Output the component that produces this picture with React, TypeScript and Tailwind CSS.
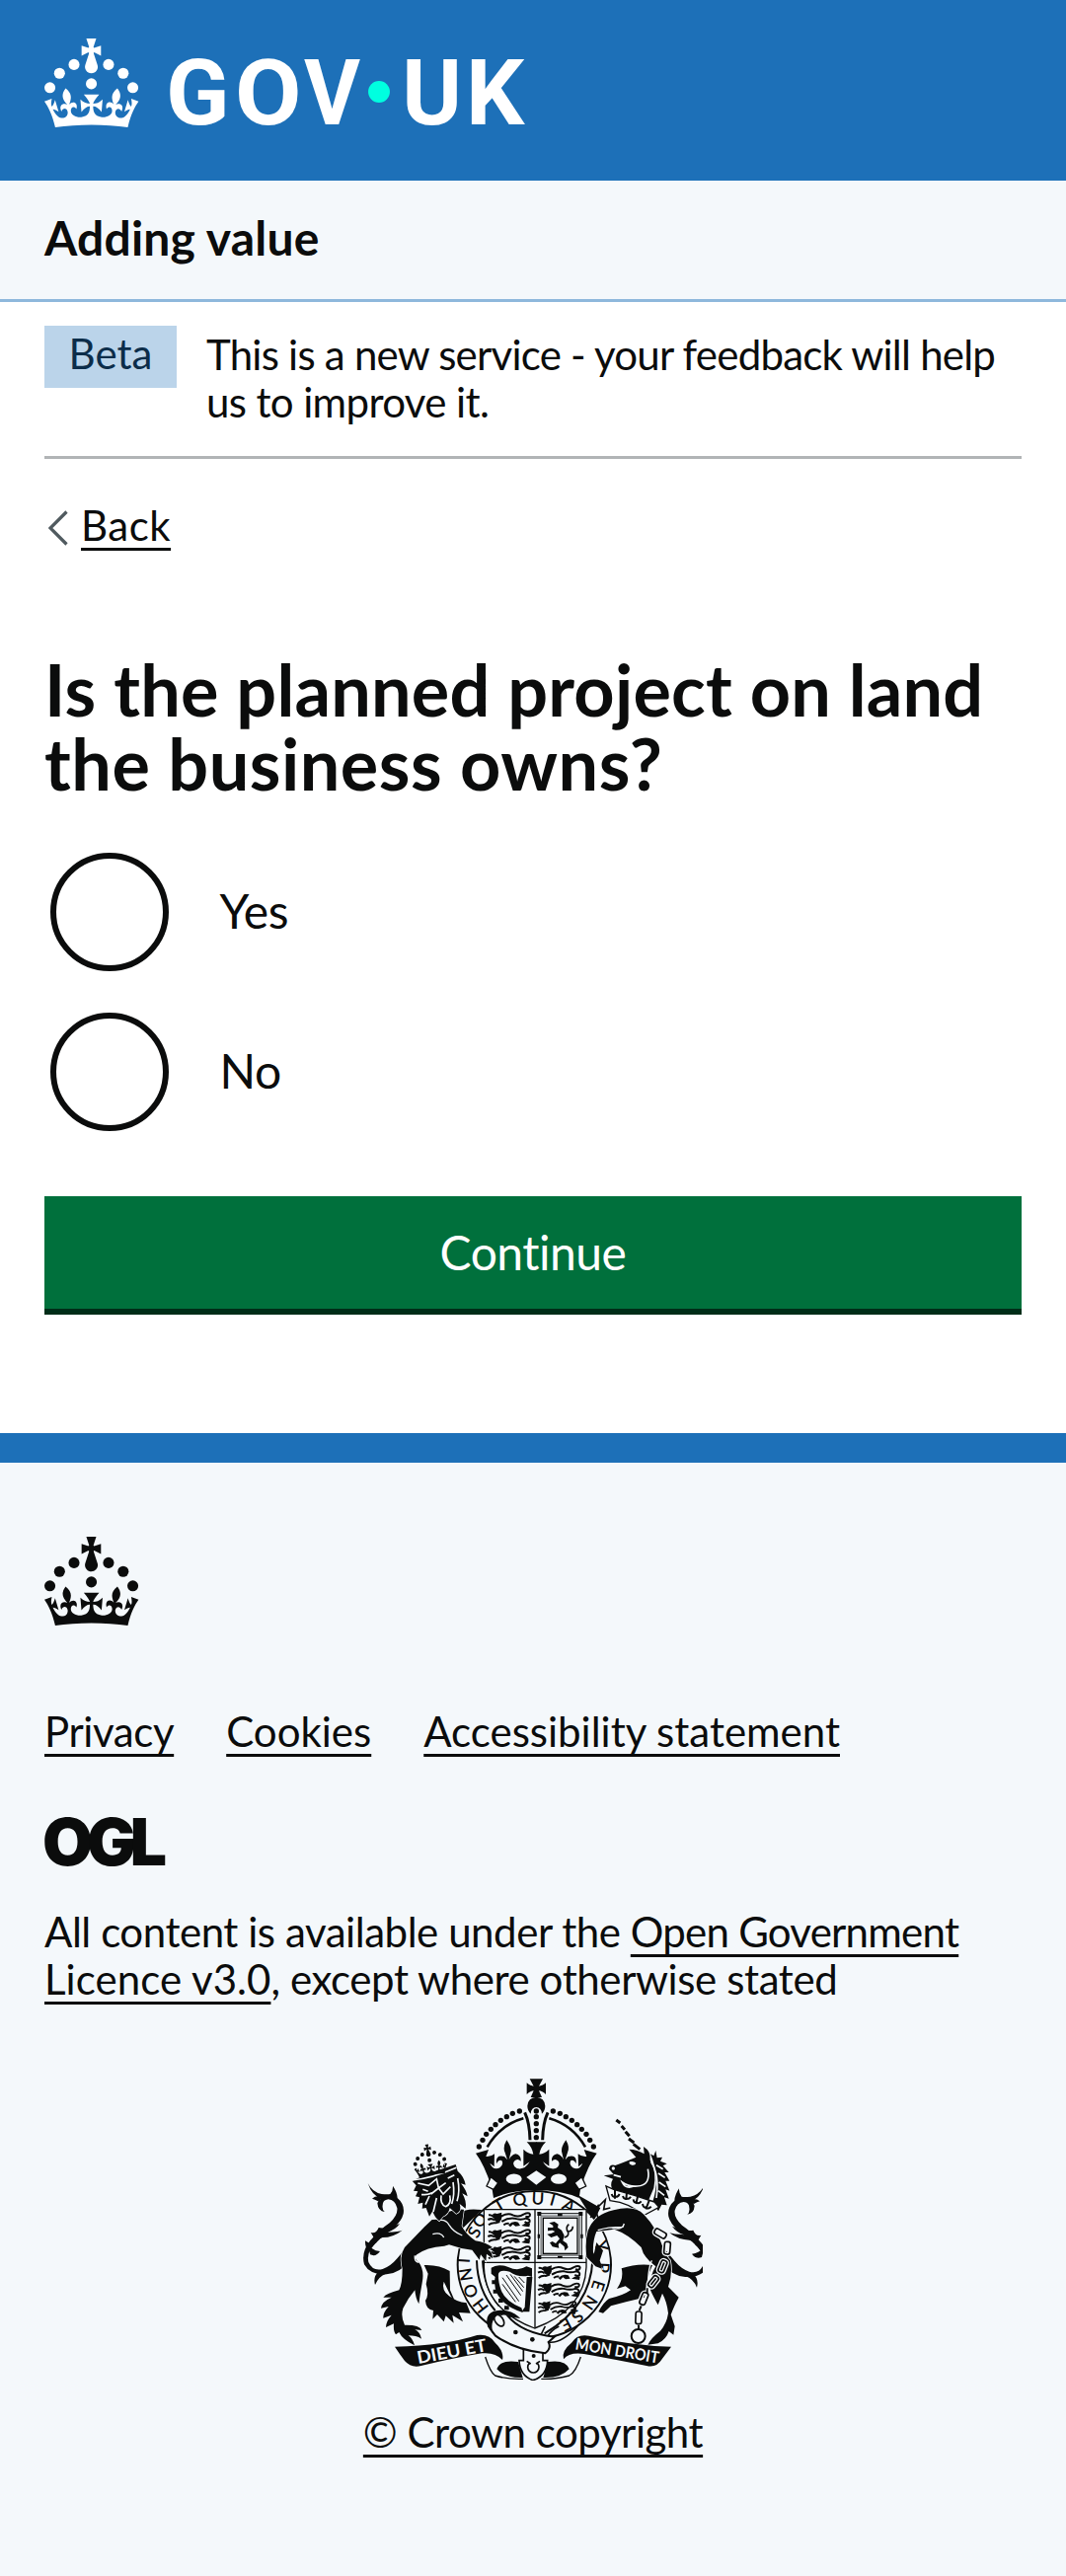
import React from 'react';

const CROWN_CIRCLES: [number, number][] = [
  [20, 17.6],
  [10.2, 23.5],
  [3.7, 33.2],
  [31.7, 30.6],
  [43.3, 17.6],
  [53.2, 23.5],
  [59.7, 33.2],
];

function CrownShape() {
  return (
    <g>
      {CROWN_CIRCLES.map(([x, y]) => (
        <circle key={x} cx={x} cy={y} r="3.7" />
      ))}
      <path d="M33.1,9.8c.2-.1.3-.3.5-.5l4.6,2.4v-6.8l-4.6,1.5c-.1-.2-.3-.3-.5-.5l1.9-5.9h-6.7l1.9,5.9c-.2.1-.3.3-.5.5l-4.6-1.5v6.8l4.6-2.4c.1.2.3.3.5.5l-2.6,8c-.9,2.8,1.2,5.7,4.1,5.7h0c3,0,5.1-2.9,4.1-5.7l-2.6-8ZM37,37.9s-3.4,3.8-4.1,6.1c2.2,0,4.2-.5,6.4-2.8l-.7,8.5c-2-2.8-4.4-4.1-5.7-3.8.1,3.1.5,6.7,5.8,7.2,3.7.3,6.7-1.5,7-3.8.4-2.6-2-4.3-3.7-1.6-1.4-4.5,2.4-6.1,4.9-3.2-1.9-4.5-1.8-7.7,2.4-10.9,3,4,2.6,7.3-1.2,11.1,2.4-1.3,6.2,0,4,4.6-1.2-2.8-3.7-2.2-4.2.2-.3,1.7.7,3.7,3,4.2,1.9.3,4.7-.9,7-5.9-1.3,0-2.4.7-3.9,1.7l2.4-8c.6,2.3,1.4,3.7,2.2,4.5.6-1.6.5-2.8,0-5.3l5,1.8c-2.6,3.6-5.2,8.7-7.3,17.5-7.4-1.1-15.7-1.7-24.5-1.7h0c-8.8,0-17.1.6-24.5,1.7-2.1-8.9-4.7-13.9-7.3-17.5l5-1.8c-.5,2.5-.6,3.7,0,5.3.8-.8,1.6-2.3,2.2-4.5l2.4,8c-1.5-1-2.6-1.7-3.9-1.7,2.3,5,5.2,6.2,7,5.9,2.3-.4,3.3-2.4,3-4.2-.5-2.4-3-3.1-4.2-.2-2.2-4.6,1.6-6,4-4.6-3.7-3.7-4.2-7.1-1.2-11.1,4.2,3.2,4.3,6.4,2.4,10.9,2.5-2.8,6.3-1.3,4.9,3.2-1.8-2.7-4.1-1-3.7,1.6.3,2.3,3.3,4.1,7,3.8,5.4-.5,5.7-4.2,5.8-7.2-1.3-.2-3.7,1-5.7,3.8l-.7-8.5c2.2,2.3,4.2,2.7,6.4,2.8-.7-2.3-4.1-6.1-4.1-6.1h10.6,0Z" />
    </g>
  );
}

function Logo() {
  return (
    <svg
      viewBox="0 0 324 60"
      className="block h-[90px] w-[486px] overflow-visible fill-white font-['Roboto',sans-serif] font-bold"
      role="img"
      aria-label="GOV.UK"
    >
      <CrownShape />
      <g fontSize="62">
        <text x="82" y="58" textLength="43" lengthAdjust="spacingAndGlyphs">G</text>
        <text x="128.6" y="58" textLength="45" lengthAdjust="spacingAndGlyphs">O</text>
        <text x="175.4" y="58" textLength="38" lengthAdjust="spacingAndGlyphs">V</text>
        <text x="241.5" y="58" textLength="40.5" lengthAdjust="spacingAndGlyphs">U</text>
        <text x="284.6" y="58" textLength="39.5" lengthAdjust="spacingAndGlyphs">K</text>
      </g>
      <circle cx="226" cy="36" r="7.3" fill="#00ffe0" />
    </svg>
  );
}

const INK = '#0b0c0c';
const BG = '#f4f8fb';

const ARCH_DOTS: [number, number][] = [
  [514, 146], [493, 153], [475, 163], [457, 174], [441, 187], [427, 201], [413, 216], [402, 234], [391, 254],
];

const LINKS: [number, number, number][] = [
  [942, 518, -60], [963, 562, 5], [949, 618, 22], [921, 664, 38], [892, 716, 22], [876, 774, 2],
];

// Centres of the letters that run round the garter
const GARTER: [string, number, number][] = [
  ['H', 396, 737], ['O', 366, 692], ['N', 351, 643], ['I', 345, 600],
  ['S', 377, 514], ['O', 394, 478], ['T', 452, 431],
  ['Q', 514, 415], ['U', 570, 412], ['I', 615, 415], ['A', 664, 434],
  ['Y', 763, 556], ['P', 768, 622], ['E', 753, 676], ['N', 727, 728], ['S', 690, 769], ['E', 655, 794],
];

function LionTail() {
  return (
    <g>
      <path d="M53 365Q66 392 95 398Q112 400 121 398Q130 388 129 373Q142 392 143 410Q166 430 161 458Q156 480 130 502Q88 532 64 562Q50 582 55 605Q68 634 98 626Q122 618 142 594L170 560L180 600Q150 640 110 642Q60 645 42 612Q32 575 60 540Q90 505 120 485Q145 462 142 440Q136 416 115 414Q98 416 98 432Q96 446 104 452Q84 450 82 426Q84 416 94 412Q66 404 53 365Z" />
      <path d="M66 412Q78 400 104 408L84 420Q74 414 66 412ZM86 500Q110 505 150 488Q136 508 112 514Q148 512 158 508Q130 530 98 530Q76 535 66 560Q44 575 45 540Q66 556 80 545L62 515Q78 520 86 500ZM52 545Q62 570 90 572Q78 590 60 582ZM75 674Q68 648 86 634L108 640Q86 648 75 674Z" />
    </g>
  );
}

function Passant({ x, y, s = 1 }: { x: number; y: number; s?: number }) {
  return (
    <g transform={`translate(${x} ${y}) scale(${s})`}>
      <path d="M14 8Q20 2 28 6L42 2Q40 10 42 16Q42 28 32 32Q20 30 18 20Z" />
      <path d="M2 10Q12 8 18 16M0 24Q12 18 20 26M2 40Q12 32 24 34L36 30" fill="none" stroke={INK} strokeWidth="6" />
      <path d="M40 14Q60 2 76 10Q94 18 108 8Q126 0 128 8Q128 18 114 14M42 30Q60 18 80 20Q100 26 116 20Q130 22 126 32Q118 36 112 30M48 40Q56 34 64 36" fill="none" stroke={INK} strokeWidth="6" />
      <path d="M62 40Q76 26 92 32L98 42L84 44L76 38L68 46ZM102 42Q116 32 128 36L126 46L112 44Z" />
    </g>
  );
}

function HalfCrown() {
  return (
    <g>
      {ARCH_DOTS.map(([x, y]) => (
        <circle key={x} cx={x} cy={y} r="8" />
      ))}
      <path d="M526 168Q455 188 416 255" fill="none" stroke={INK} strokeWidth="8" />
      <path d="M530 150Q545 182 546 234" fill="none" stroke={INK} strokeWidth="9" />
      <path d="M381 274L420 263L412 284Q426 286 438 276L437 315L424 304Q434 328 454 318Q467 308 460 296Q450 292 444 306Q440 276 468 284L477 294L470 272Q462 256 475 234Q490 256 488 268L482 294Q488 280 502 276Q520 280 518 298Q508 288 498 298Q490 310 506 320Q530 326 545 300L526 313V262Q540 276 556 277Q552 255 536 240H566V386Q490 386 435 410L430 378Q405 305 381 274Z" />
      <ellipse cx="497" cy="352" rx="24" ry="15.500" fill={BG} />
      <path d="M427 346L449 364L435 384L414 374Z" fill={BG} stroke={INK} strokeWidth="4" />
    </g>
  );
}

function CoatOfArms() {
  return (
    <svg viewBox="39 47 1032 918" className="block h-[306px] w-[344px]" fill={INK} aria-hidden="true">
      {/* Dark lining behind the garter */}
      <path d="M335 455Q350 440 400 446L338 505ZM690 400L760 440L740 480Z" />

      {/* Garter */}
      <ellipse cx="559" cy="613" rx="233" ry="224" fill={BG} stroke={INK} strokeWidth="6" />
      <path d="M384 600Q386 690 440 752M402 600Q406 684 452 738M736 600Q730 740 590 822" fill="none" stroke={INK} strokeWidth="6" />
      <g fontSize="52" textAnchor="middle" className="font-['Lato',sans-serif] font-semibold">
        {GARTER.map(([ch, x, y]) => (
          <text
            key={`${x}-${y}`}
            y="18"
            transform={`translate(${x} ${y}) rotate(${(Math.atan2(x - 559, 612 - y) * 180) / Math.PI})`}
          >
            {ch}
          </text>
        ))}
      </g>

      {/* Shield */}
      <path d="M406 445H717V620Q712 750 560 806Q410 750 406 620Z" fill={BG} stroke={INK} strokeWidth="4" />
      <path d="M561 445V804M406 606H717" stroke={INK} strokeWidth="4" />
      <Passant x={418} y={452} />
      <Passant x={418} y={503} />
      <Passant x={418} y={554} />
      <Passant x={570} y={613} />
      <Passant x={570} y={666} s={0.98} />
      <Passant x={570} y={722} s={0.9} />
      <g fill="none" stroke={INK}>
        <rect x="572" y="457" width="131" height="135" strokeWidth="3" />
        <rect x="580" y="465" width="116" height="119" strokeWidth="6" stroke="#8b8e90" />
        <rect x="586" y="471" width="104" height="108" strokeWidth="4" />
      </g>
      <path d="M568 452h12v12h-12zM694 452h12v12h-12zM568 584h12v12h-12zM694 584h12v12h-12zM630 458h14v7h-14zM630 586h14v7h-14zM569 520h7v12h-7zM700 520h7v12h-7z" />
      <path d="M604 486L620 482L632 490L630 500L642 508L650 524L646 540L658 548L662 560L652 570L650 558L636 546L632 552L634 562L614 558L606 546L614 542L624 548L636 534L628 524L610 530L598 520L610 518L622 512L614 508L600 510L600 500L616 500L616 494Z" />
      <path d="M650 530Q664 528 662 514Q652 500 664 490M662 512Q676 510 676 496" fill="none" stroke={INK} strokeWidth="5" />

      {/* Harp */}
      <path d="M428 622Q448 608 480 620Q510 634 535 618L552 624V650L540 646Q510 652 484 634Q455 626 450 640Q448 660 458 690Q470 722 520 744L524 758Q470 742 448 705Q434 680 440 650L428 640Z" />
      <path d="M536 650H553L544 756H520L530 742Z" />
      <path d="M462 652L512 724M474 644L518 706M486 642L524 694M498 648L527 682M462 672L502 726M512 650L529 668" stroke={INK} strokeWidth="3" />
      <path d="M430 660h14v12h-14zM434 688h14v12h-14zM450 716h14v12h-14zM468 738h14v12h-14z" />

      {/* Crown */}
      <path d="M545 48H585L573 70Q582 70 594 60V95Q582 84 573 84L582 104H548L557 84Q548 84 536 95V60Q548 70 557 70Z" />
      <path d="M538 130a27 27 0 0 1 54 0q0 14 -10 24q-2 -20 -17 -20t-17 20q-10 -10 -10 -24Z" />
      {[146, 163, 184, 205, 226].map((y) => (
        <circle key={y} cx="565" cy={y} r="8" />
      ))}
      <HalfCrown />
      <g transform="translate(1130 0) scale(-1 1)">
        <HalfCrown />
      </g>
      <path d="M565 327L595 347L565 370L535 347Z" fill={BG} />

      {/* Lion */}
      <LionTail />
      <path
        d="M248 476L225 498L165 560Q148 585 158 625Q158 670 148 690Q110 700 100 712L125 712Q95 725 93 745L116 740Q98 760 100 775L125 766Q108 785 108 803L132 792Q130 815 138 825L148 818Q158 840 195 858Q190 838 176 828Q200 828 216 838Q212 818 196 810L217 812Q210 795 165 796Q152 770 160 745Q175 715 196 690Q198 715 208 732Q212 700 218 668Q226 630 208 606Q190 590 202 582Q230 560 285 556L300 552Q335 565 370 568L392 598L396 582L412 602L414 580L432 594Q432 575 418 566L432 560Q412 545 380 540Q350 520 338 495L345 445Q300 440 265 475Z"
        stroke={BG}
        strokeWidth="4"
        paintOrder="stroke"
      />
      <path d="M224 614Q270 612 302 632L303 690L318 724L306 710L284 664Q276 690 300 708Q330 730 352 728L365 760L330 758L342 786L310 766L314 790L290 768L284 786L264 764L250 778L252 752Q230 750 228 722Q240 704 230 672L236 640Z" />
      <path d="M196 585Q194 605 208 606M250 520Q275 512 284 530M268 478Q290 474 300 492Q312 512 340 524" fill="none" stroke={BG} strokeWidth="4" />
      <path
        d="M188 358L230 338L320 308L326 328Q346 345 350 370L336 366Q352 385 356 405L340 396Q354 420 350 442L332 428Q340 450 322 458L302 440Q298 460 282 466L270 480Q255 468 250 450L240 466L230 440L218 442L220 424L205 428L210 408L198 405L205 390L192 388L200 372Z"
        stroke={BG}
        strokeWidth="4"
        paintOrder="stroke"
      />
      <path d="M188 356Q250 350 322 318M205 365L238 372L262 352L268 380L290 364M245 398L268 380L282 398L304 376M276 402Q272 430 290 436Q308 428 302 402M216 400Q238 400 248 394M228 430L240 404M252 452L262 410M312 362Q318 400 308 428M326 350Q334 390 324 420M296 350L316 340M220 384L236 390" fill="none" stroke={BG} strokeWidth="5" />
      <g transform="translate(182 256) rotate(-10) scale(1.6)">
        <CrownShape />
      </g>

      {/* Unicorn */}
      <g transform="translate(1128 8) scale(-1 1)">
        <LionTail />
      </g>
      <path d="M808 173L820 182M824 191L834 202M836 208L848 222M846 230L862 242M860 246L880 262" stroke={INK} strokeWidth="9" />
      <path d="M786 322Q788 306 805 311Q845 296 868 286L847 262Q872 262 893 276L891 254Q914 268 911 295Q932 330 922 380L900 432L880 418Q850 420 838 398Q815 384 800 392Q786 370 798 352L770 342L800 338Z" />
      <path d="M912 276L922 282L928 266L932 288L948 286L942 298L962 306L950 312L968 332L955 332L970 358L958 358L970 388L958 384L968 412L954 408L962 432L946 430L936 450L918 424Q944 350 912 276Z" />
      <path d="M848 300a10 8 0 1 0 20 4q-8 -8 -20 -4ZM794 320a5 5 0 1 0 10 0a5 5 0 1 0 -10 0Z" fill={BG} />
      <path d="M904 322Q914 372 872 374Q846 376 826 362Q836 384 862 374M800 340L822 346M914 300Q940 340 930 410M930 310L950 322M936 335L956 348M938 362L958 376M936 388L954 402" fill="none" stroke={BG} strokeWidth="5" />
      <path d="M777 374L789 418Q852 425 890 464L938 438L924 422Q860 400 800 384Z" fill={BG} stroke={INK} strokeWidth="4" />
      <g fill="none" stroke={INK} strokeWidth="6">
        <path d="M804 384V412M794 398Q798 410 804 404Q812 410 818 398M840 392L838 416M828 404Q832 416 838 410Q846 416 852 406M874 402L868 428M860 414Q862 426 868 422Q876 430 884 420M908 418L898 444M888 428Q890 440 898 438Q906 446 914 436" />
      </g>
      <path
        d="M722 510Q740 460 800 447Q862 430 892 460Q930 500 946 550Q954 580 972 600Q980 640 966 680L998 712Q982 742 974 765L986 800L982 826L968 815Q960 840 935 852L904 856Q914 835 942 814Q962 790 966 760Q962 725 948 700L935 735Q918 705 912 690Q908 650 928 618Q890 590 884 560Q845 520 802 505L748 512Q736 540 738 575L765 625L745 618L718 590Q712 545 722 510Z"
        stroke={BG}
        strokeWidth="5"
        paintOrder="stroke"
      />
      <path d="M748 545L768 570L758 600L766 622L750 616L738 590ZM824 624Q870 608 918 614Q900 650 894 712Q840 724 792 738L768 760L754 756Q768 728 786 716Q830 706 852 690L836 678L810 686Q832 655 824 624Z" />
      <path d="M832 488Q828 508 796 502M752 508Q780 498 830 498M916 600Q900 640 908 690" fill="none" stroke={BG} strokeWidth="4" />
      <path d="M748 440Q745 470 765 480M750 440L775 415L770 445L790 440M730 470L755 430" fill="none" stroke={INK} strokeWidth="5" />
      {LINKS.map(([x, y, r]) => (
        <g key={y} transform={`translate(${x} ${y}) rotate(${r})`} fill="none">
          <rect x="-9" y="-19" width="18" height="38" rx="7" stroke={BG} strokeWidth="13" />
          <rect x="-9" y="-19" width="18" height="38" rx="7" stroke={INK} strokeWidth="5" />
        </g>
      ))}
      <path d="M902 684V700M884 738L878 752M876 796V808" stroke={INK} strokeWidth="6" />
      <circle cx="875" cy="830" r="21" fill={BG} stroke={INK} strokeWidth="6" />

      {/* Scroll */}
      <path d="M410 893Q425 940 440 950Q480 962 525 960M700 893Q685 940 665 950Q620 962 580 960" fill="none" stroke={INK} strokeWidth="4" />
      <path d="M445 930Q455 900 510 908L524 956Q470 958 445 930ZM665 930Q655 900 600 908L586 956Q640 958 665 930Z" />
      <path d="M135 862Q290 858 385 827Q422 822 440 850Q468 876 462 902Q440 878 400 882Q320 895 215 920Q185 928 165 905Q150 885 135 862Z" />
      <path d="M975 862Q850 858 725 829Q690 822 672 850Q640 876 648 900Q665 878 710 884Q800 900 900 920Q930 928 947 900Z" />
      <g fill={BG} fontSize="53" className="font-['Lato',sans-serif] font-bold">
        <text transform="translate(206 914) rotate(-10.500)" textLength="214" lengthAdjust="spacingAndGlyphs">DIEU ET</text>
        <text transform="translate(682 870) rotate(9.500)" textLength="256" lengthAdjust="spacingAndGlyphs" fontSize="49">MON DROIT</text>
      </g>

      {/* Strap and buckle */}
      <path d="M526 868V904L513 904Q515 950 555 964Q598 950 599 904H585V860" fill={BG} stroke={INK} strokeWidth="5" />
      <path d="M420 800Q408 756 455 754Q490 754 508 772L478 768Q520 820 620 832L602 848Q612 866 592 882Q500 872 440 828Z" fill={BG} stroke={INK} strokeWidth="6" />
      <path d="M420 800Q408 756 455 754Q490 754 508 772Q470 762 445 768Q425 785 432 815L448 834Q428 824 420 800Z" />
      <ellipse cx="452" cy="782" rx="12" ry="20" transform="rotate(-35 452 782)" fill="none" stroke={INK} strokeWidth="5" />
      <path d="M592 800L580 824M600 848Q640 855 690 800M600 830Q610 812 634 800" fill="none" stroke={INK} strokeWidth="5" />
      <path d="M544 912a17 17 0 1 0 24 0M536 906L548 914M576 906L564 914" fill="none" stroke={INK} strokeWidth="5" />
      <circle cx="502" cy="818" r="7" />
      <circle cx="553" cy="840" r="7" />
      <circle cx="557" cy="890" r="6" />
    </svg>
  );
}

const link =
  'underline decoration-[3px] underline-offset-[7px] [text-decoration-skip-ink:none]';

function Radio({ label }: { label: string }) {
  return (
    <label className="flex h-[120px] items-center">
      <input type="radio" name="land" className="peer sr-only" />
      <span className="size-[120px] rounded-full border-[6px] border-[#0b0c0c] bg-white" />
      <span className="-mt-[2px] ml-[51.500px] text-[48px] leading-[60px] tracking-[-0.4px]">{label}</span>
    </label>
  );
}

export default function App() {
  return (
    <div className="flex min-h-[2610px] w-[1080px] flex-col bg-white font-['Lato',sans-serif] text-[42px] leading-[48px] text-[#0b0c0c]">
      <header>
        <div className="h-[183px] bg-[#1d70b8] px-[45px] pt-[39px]">
          <Logo />
        </div>
        <div className="h-[123px] border-b-[3px] border-[#8eb8dc] bg-[#f4f8fb] px-[45px] pt-[28px]">
          <span className="block text-[48px] leading-[60px] font-bold tracking-[0.2px]">Adding value</span>
        </div>
      </header>

      <div className="mx-[45px] flex h-[159px] gap-[30px] border-b-[3px] border-[#b1b4b6] pt-6">
        <strong className="h-[63px] w-[134px] shrink-0 bg-[#bbd4ea] pt-1 text-center font-normal text-[#0c2d4a]">
          Beta
        </strong>
        <p className="pt-[5px] tracking-[-0.76px] whitespace-nowrap">
          This is a new service - your feedback will help
          <br />
          <span className="tracking-[-0.62px]">us to improve it.</span>
        </p>
      </div>

      <main className="flex flex-col px-[45px]">
        <a className="mt-[43px] flex h-12 items-center">
          <svg viewBox="0 0 20 36" className="mt-[6px] ml-1 h-9 w-5" fill="none" stroke="#505a5f" strokeWidth="3.200">
            <path d="M18.500 1.500L2 18L18.500 34.500" />
          </svg>
          <span className={`ml-[13px] tracking-[0.5px] ${link}`}>Back</span>
        </a>

        <h1 className="mt-[105px] text-[72px] leading-[75px] font-bold whitespace-nowrap">
          <span className="tracking-[0.2px]">Is the planned project on land</span>
          <br />
          <span className="tracking-[0.5px]">the business owns?</span>
        </h1>

        <div className="mt-[53px] flex flex-col gap-[42px] pl-[6px]">
          <Radio label="Yes" />
          <Radio label="No" />
        </div>

        <button className="mt-[66px] h-[120px] border-b-[6px] border-[#002d18] bg-[#00703c] text-[48px] leading-[60px] tracking-[-0.5px] text-white">
          Continue
        </button>
      </main>

      <footer className="mt-[120px] flex grow flex-col border-t-[30px] border-[#1d70b8] bg-[#f4f8fb] px-[45px] pt-[75px]">
        <svg viewBox="0 0 64 60" className="h-[90px] w-24 shrink-0" fill={INK} aria-hidden="true">
          <CrownShape />
        </svg>
        <nav className="mt-[83px] flex gap-[53px] whitespace-nowrap">
          <a className={`tracking-[-0.4px] ${link}`}>Privacy</a>
          <a className={link}>Cookies</a>
          <a className={link}>Accessibility statement</a>
        </nav>
        <svg viewBox="0 0 123 50" className="mt-[62px] h-[50px] w-[123px] shrink-0 overflow-visible" fill={INK} aria-hidden="true">
          <text
            x="-2"
            y="49.500"
            fontSize="66"
            textLength="126"
            lengthAdjust="spacing"
            className="font-['Inter',sans-serif] font-black"
          >
            OGL
          </text>
        </svg>
        <p className="mt-[43px] tracking-[-0.45px] whitespace-nowrap">
          All content is available under the{' '}
          <a className={`tracking-[-0.75px] ${link}`}>Open Government</a>
          <br />
          <a className={`tracking-[0.05px] ${link}`}>Licence v3.0</a>
          <span className="tracking-[-0.4px]">, except where otherwise stated</span>
        </p>
        <div className="mt-[77px] flex flex-col items-center">
          <CoatOfArms />
          <a className={`mt-[28px] tracking-[-0.47px] ${link}`}>© Crown copyright</a>
        </div>
      </footer>
    </div>
  );
}
